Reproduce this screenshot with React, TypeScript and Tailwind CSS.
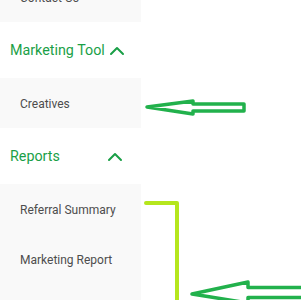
import React from "react";
import { ChevronUp } from "lucide-react";

const SubItem = ({ label, className = "" }: { label: string; className?: string }) => (
  <a
    className={
      "flex h-[50px] items-center bg-[#f9f9f9] pl-5 pt-[2px] text-[12px] whitespace-nowrap text-[#4d4d4d] " +
      className
    }
  >
    {label}
  </a>
);

const GroupHeader = ({ label }: { label: string }) => (
  <div className="flex h-[56px] items-center justify-between pl-[10px] pr-[14px] pt-[1px] text-[14.3px] whitespace-nowrap text-[#1a9f47]">
    <span>{label}</span>
    <ChevronUp size={24} strokeWidth={2} className="shrink-0" />
  </div>
);

export default function App() {
  return (
    <div className="relative h-[300px] w-[301px] overflow-hidden bg-white font-['Roboto',sans-serif]">
      <nav className="flex w-[141px] flex-col">
        <SubItem label="Contact Us" className="-mt-[28px]" />
        <GroupHeader label="Marketing Tool" />
        <SubItem label="Creatives" />
        <GroupHeader label="Reports" />
        <div className="flex h-[120px] flex-col bg-[#f9f9f9]">
          <SubItem label="Referral Summary" />
          <SubItem label="Marketing Report" />
        </div>
      </nav>

      {/* annotation marks drawn over the screenshot */}
      <svg
        className="pointer-events-none absolute inset-0"
        width="301"
        height="300"
        viewBox="0 0 301 300"
      >
        <polygon
          points="147,107 193,101 193,104 244,104 244,111 193,111 193,114"
          fill="none"
          stroke="#22b14c"
          strokeWidth="3.5"
          strokeLinejoin="round"
        />
        <polyline
          points="146,203 177,203 177,306"
          fill="none"
          stroke="#b5e61d"
          strokeWidth="4"
          strokeLinecap="round"
          strokeLinejoin="round"
        />
        <polygon
          points="192,294 248,282 248,287.5 306,287.5 306,297.5 248,297.5 248,303"
          fill="none"
          stroke="#22b14c"
          strokeWidth="3.5"
          strokeLinejoin="round"
        />
      </svg>
    </div>
  );
}
